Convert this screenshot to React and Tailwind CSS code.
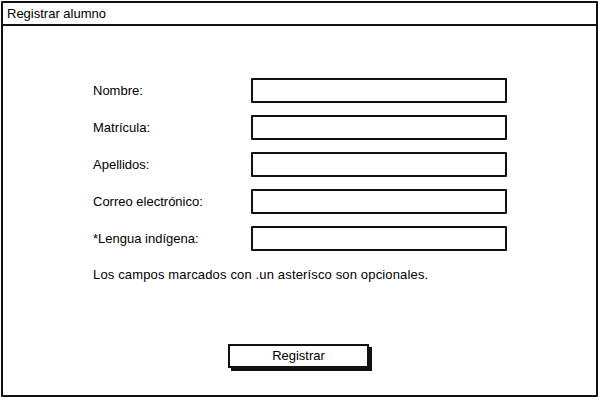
import React from 'react';

const fields = ['Nombre:', 'Matrícula:', 'Apellidos:', 'Correo electrónico:', '*Lengua indígena:'];

export default function App() {
  return (
    <div className="w-[600px] h-[400px] bg-white p-px font-['Liberation_Sans',sans-serif] text-[13px] text-black">
      <div className="w-[597px] h-[396px] border-2 border-[#111] flex flex-col rounded-[1px]">
        <div className="h-[23px] border-b-2 border-[#111] flex items-center px-[4px] shrink-0">
          Registrar alumno
        </div>
        <div className="flex-1 flex flex-col pl-[90px] pt-[52px]">
          <div className="flex flex-col gap-[12px]">
            {fields.map((label) => (
              <div key={label} className="flex items-center h-[25px]">
                <div className="w-[158px]">{label}</div>
                <div className="w-[256px] h-[25px] border-2 border-[#111] rounded-[1px] bg-white" />
              </div>
            ))}
          </div>
          <div className="mt-[14px] tracking-[0.15px]">Los campos marcados con .un asterísco son opcionales.</div>
          <div className="mt-[59px] ml-[135px] w-[141px] h-[24px] border-2 border-[#111] shadow-[3px_3px_0_#111] flex items-center justify-center">
            Registrar
          </div>
        </div>
      </div>
    </div>
  );
}
